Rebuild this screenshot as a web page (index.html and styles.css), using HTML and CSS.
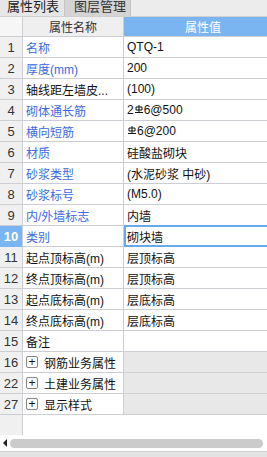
FILE: index.html
```html
<!DOCTYPE html>
<html>
<head>
<meta charset="utf-8">
<link rel="stylesheet" href="styles.css">
</head>
<body>
<div class="panel">
  <div class="tabs">
    <div class="tab active">属性列表</div>
    <div class="tab">图层管理</div>
  </div>
  <div class="grid">
    <div class="row head">
      <div class="num"></div>
      <div class="name">属性名称</div>
      <div class="val">属性值</div>
    </div>
    <div class="row"><div class="num">1</div><div class="name blue">名称</div><div class="val">QTQ-1</div></div>
    <div class="row"><div class="num">2</div><div class="name blue">厚度(mm)</div><div class="val">200</div></div>
    <div class="row"><div class="num">3</div><div class="name">轴线距左墙皮...</div><div class="val">(100)</div></div>
    <div class="row"><div class="num">4</div><div class="name blue">砌体通长筋</div><div class="val">2<svg class="bar" width="8" height="8" viewBox="0 0 8 8"><path d="M4 0V8M1 2H7V5H1ZM0 7.5H8" fill="none" stroke="#111" stroke-width="1"/></svg>6@500</div></div>
    <div class="row"><div class="num">5</div><div class="name blue">横向短筋</div><div class="val"><svg class="bar" width="8" height="8" viewBox="0 0 8 8"><path d="M4 0V8M1 2H7V5H1ZM0 7.5H8" fill="none" stroke="#111" stroke-width="1"/></svg>6@200</div></div>
    <div class="row"><div class="num">6</div><div class="name blue">材质</div><div class="val">硅酸盐砌块</div></div>
    <div class="row"><div class="num">7</div><div class="name blue">砂浆类型</div><div class="val">(水泥砂浆 中砂)</div></div>
    <div class="row"><div class="num">8</div><div class="name blue">砂浆标号</div><div class="val">(M5.0)</div></div>
    <div class="row"><div class="num">9</div><div class="name blue">内/外墙标志</div><div class="val">内墙</div></div>
    <div class="row sel"><div class="num">10</div><div class="name blue">类别</div><div class="val">砌块墙</div></div>
    <div class="row"><div class="num">11</div><div class="name">起点顶标高(m)</div><div class="val">层顶标高</div></div>
    <div class="row"><div class="num">12</div><div class="name">终点顶标高(m)</div><div class="val">层顶标高</div></div>
    <div class="row"><div class="num">13</div><div class="name">起点底标高(m)</div><div class="val">层底标高</div></div>
    <div class="row"><div class="num">14</div><div class="name">终点底标高(m)</div><div class="val">层底标高</div></div>
    <div class="row"><div class="num">15</div><div class="name">备注</div><div class="val"></div></div>
    <div class="row group"><div class="num">16</div><div class="name"><span class="plus">+</span>钢筋业务属性</div><div class="val"></div></div>
    <div class="row group"><div class="num">22</div><div class="name"><span class="plus">+</span>土建业务属性</div><div class="val"></div></div>
    <div class="row group"><div class="num">27</div><div class="name"><span class="plus">+</span>显示样式</div><div class="val"></div></div>
    <div class="filler"><div class="num"></div></div>
  </div>
  <div class="hscroll">
    <div class="arrow"></div>
    <div class="thumb"></div>
  </div>
  <div class="bottom"></div>
</div>
</body>
</html>
```
FILE: styles.css
```css
* { box-sizing: border-box; }
html, body { margin: 0; padding: 0; }
body {
  width: 267px;
  height: 457px;
  overflow: hidden;
  background: #fff;
  font-family: "Liberation Sans", "Noto Sans CJK SC", sans-serif;
  font-size: 12px;
  color: #111;
}
.panel { display: flex; flex-direction: column; width: 267px; height: 457px; overflow: hidden; }
.tabs {
  display: flex;
  height: 17px;
  background: #ececec;
  border-bottom: 1px solid #d0d0d0;
}
.tab {
  width: 66px;
  height: 16px;
  line-height: 14px;
  font-size: 13px;
  padding-left: 7px;
  color: #222;
  background: #d4d4d4;
  border-right: 1px solid #c4c4c4;
  white-space: nowrap;
}
.tab + .tab { padding-left: 9px; color: #333; }
.tab.active { background: #e6e6e6; width: 65px; }
.grid { width: 267px; overflow: hidden; }
.row {
  display: grid;
  grid-template-columns: 23px 101px 158px;
  width: 282px;
  height: 21px;
  border-bottom: 1px solid #cdcdd4;
}
.row > div { display: flex; align-items: center; overflow: hidden; white-space: nowrap; }
.num {
  justify-content: center;
  background: #f0f0f0;
  border-right: 1px solid #cdcdd4;
  font-size: 13px;
  color: #333;
}
.name { padding-left: 3px; border-right: 1px solid #cdcdd4; }
.val { padding-left: 3px; }
.blue { color: #3d6ae0; }
.head { height: 20px; background: #efefef; }
.head .num { background: #f6f6f6; }
.head .name { justify-content: center; color: #333; padding-left: 0; }
.head .val { justify-content: center; background: #7ab5f2; color: #fff; padding-left: 0; }
.sel .num { background: #7ab5f2; color: #fff; font-weight: bold; }
.sel .val { border: 2px solid #6aa8ea; padding-left: 1px; margin-top: -1px; height: 22px; }
.bar { margin: 0 1px; align-self: flex-start; margin-top: 5px; }
.group .val { background: #e8e8e8; }
.plus {
  display: inline-flex;
  align-items: center;
  justify-content: center;
  width: 12px;
  height: 12px;
  border: 1px solid #888;
  border-radius: 2px;
  font-size: 12px;
  line-height: 1;
  margin-right: 6px;
  color: #111;
}
.filler { height: 20px; display: flex; }
.filler .num { width: 23px; background: #f0f0f0; }
.hscroll {
  height: 16px;
  display: flex;
  align-items: center;
  background: #fff;
}
.arrow {
  width: 0; height: 0;
  border-top: 4px solid transparent;
  border-bottom: 4px solid transparent;
  border-right: 4px solid #222;
  margin-left: 3px;
  margin-right: 3px;
}
.thumb {
  width: 253px;
  height: 9px;
  border-radius: 5px;
  background: #cbcbcb;
}
.bottom { flex: 1; background: #e4e4e4; border-top: 1px solid #cfcfcf; }
```
